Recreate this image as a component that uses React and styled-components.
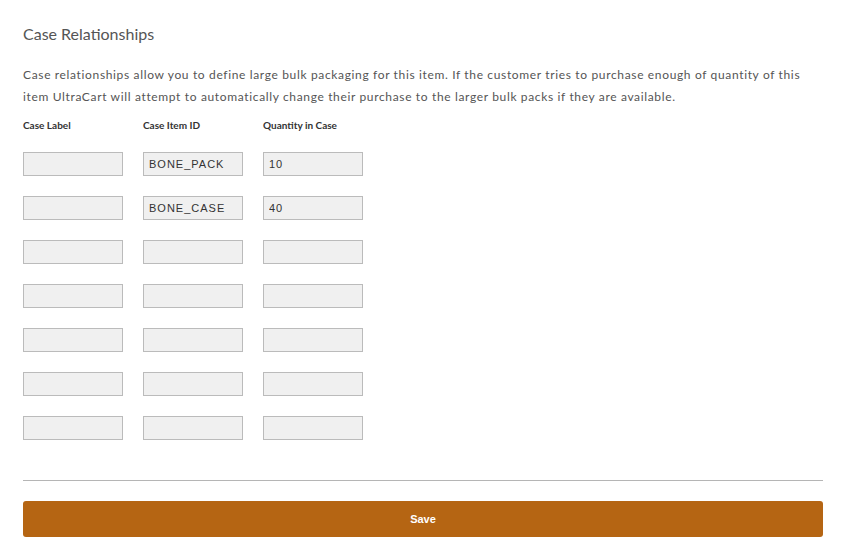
import React, { useState } from 'react';
import styled, { createGlobalStyle } from 'styled-components';

const GlobalStyle = createGlobalStyle`
  * { box-sizing: border-box; }
  body {
    margin: 0;
    background: #ffffff;
    font-family: Lato, 'Liberation Sans', sans-serif;
  }
`;

const Page = styled.div`
  padding: 24px 18px 14px 23px;
`;

const Title = styled.h2`
  font-family: Lato, sans-serif;
  font-weight: 400;
  font-size: 16px;
  color: #555555;
  margin: 0 0 20px 0;
  line-height: 20px;
`;

const Description = styled.p`
  font-family: Lato, sans-serif;
  font-size: 12px;
  letter-spacing: 0.65px;
  color: #555555;
  line-height: 22px;
  margin: 0 0 11px 0;
`;

const Grid = styled.div`
  display: grid;
  grid-template-columns: repeat(3, 100px);
  column-gap: 20px;
  row-gap: 20px;
`;

const HeaderCell = styled.div`
  font-family: Lato, sans-serif;
  font-weight: 700;
  font-size: 10px;
  color: #333333;
  line-height: 12px;
  margin-bottom: 1px;
`;

const CellInput = styled.input`
  width: 100px;
  height: 24px;
  padding: 0 5px;
  background: #f0f0f0;
  border: 1px solid #bbbbbb;
  border-radius: 0;
  font-family: 'Liberation Sans', Arial, sans-serif;
  font-size: 11px;
  letter-spacing: 1px;
  color: #333333;
  outline: none;
`;

const Divider = styled.hr`
  border: none;
  border-top: 1px solid #b5b5b5;
  margin: 40px 0 20px 0;
`;

const SaveButton = styled.button`
  display: block;
  width: 100%;
  height: 36px;
  background: #b56513;
  border: none;
  border-radius: 3px;
  color: #ffffff;
  font-family: 'Liberation Sans', Arial, sans-serif;
  font-weight: 700;
  font-size: 11px;
  cursor: pointer;
`;

const initialRows = [
  { label: '', item: 'BONE_PACK', qty: '10' },
  { label: '', item: 'BONE_CASE', qty: '40' },
  { label: '', item: '', qty: '' },
  { label: '', item: '', qty: '' },
  { label: '', item: '', qty: '' },
  { label: '', item: '', qty: '' },
  { label: '', item: '', qty: '' },
];

const App = () => {
  const [rows, setRows] = useState(initialRows);

  const update = (index, field, value) => {
    setRows(rows.map((r, i) => (i === index ? { ...r, [field]: value } : r)));
  };

  return (
    <Page>
      <GlobalStyle />
      <Title>Case Relationships</Title>
      <Description>
        Case relationships allow you to define large bulk packaging for this item. If the customer tries to purchase enough of quantity of this
        item UltraCart will attempt to automatically change their purchase to the larger bulk packs if they are available.
      </Description>

      <Grid>
        <HeaderCell>Case Label</HeaderCell>
        <HeaderCell>Case Item ID</HeaderCell>
        <HeaderCell>Quantity in Case</HeaderCell>
        {rows.map((row, i) => (
          <React.Fragment key={i}>
            <CellInput value={row.label} onChange={e => update(i, 'label', e.target.value)} />
            <CellInput value={row.item} onChange={e => update(i, 'item', e.target.value)} />
            <CellInput value={row.qty} onChange={e => update(i, 'qty', e.target.value)} />
          </React.Fragment>
        ))}
      </Grid>

      <Divider />
      <SaveButton>Save</SaveButton>
    </Page>
  );
};

export default App;
